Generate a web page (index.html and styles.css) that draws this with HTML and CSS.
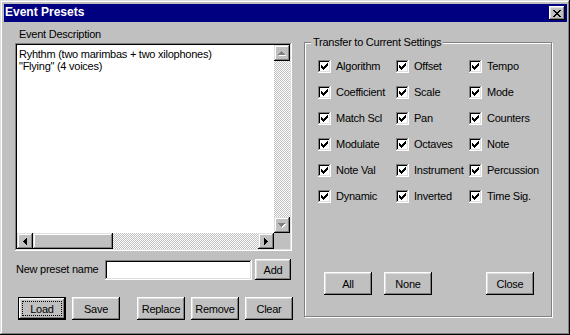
FILE: index.html
```html
<!DOCTYPE html>
<html>
<head>
  <title>Event Presets</title>
  <link rel="stylesheet" href="styles.css">
</head>
<body>
  <div class="window">
    <div class="titlebar">
      <span class="title">Event Presets</span>
      <button class="close-btn">
        <svg width="8" height="7" viewBox="0 0 8 7" shape-rendering="crispEdges"><path fill="#000" d="M0 0h2v1h-2z M6 0h2v1h-2z M1 1h2v1h-2z M5 1h2v1h-2z M2 2h4v1h-4z M3 3h2v1h-2z M2 4h4v1h-4z M1 5h2v1h-2z M5 5h2v1h-2z M0 6h2v1h-2z M6 6h2v1h-2z"/></svg>
      </button>
    </div>

    <div class="content">
      <!-- preset list side -->
      <div class="left">
        <div class="caption">Event Description</div>
        <div class="listbox">
          <div class="items">
            <div>Ryhthm (two marimbas + two xilophones)</div>
            <div>"Flying" (4 voices)</div>
          </div>
          <div class="vscroll">
            <div class="sbtn">
              <svg width="8" height="5" viewBox="0 0 8 5" shape-rendering="crispEdges"><path fill="#fff" d="M4 1h1v1h-1z M3 2h3v1h-3z M2 3h5v1h-5z M1 4h7v1h-7z"/><path fill="#808080" d="M3 0h1v1h-1z M2 1h3v1h-3z M1 2h5v1h-5z M0 3h7v1h-7z"/></svg>
            </div>
            <div class="track"></div>
            <div class="sbtn">
              <svg width="8" height="5" viewBox="0 0 8 5" shape-rendering="crispEdges"><path fill="#fff" d="M1 1h7v1h-7z M2 2h5v1h-5z M3 3h3v1h-3z M4 4h1v1h-1z"/><path fill="#808080" d="M0 0h7v1h-7z M1 1h5v1h-5z M2 2h3v1h-3z M3 3h1v1h-1z"/></svg>
            </div>
          </div>
          <div class="hscroll">
            <div class="sbtn">
              <svg width="4" height="7" viewBox="0 0 4 7" shape-rendering="crispEdges"><path fill="#000" d="M3 0h1v7h-1z M2 1h1v5h-1z M1 2h1v3h-1z M0 3h1v1h-1z"/></svg>
            </div>
            <div class="thumb"></div>
            <div class="track"></div>
            <div class="sbtn">
              <svg width="4" height="7" viewBox="0 0 4 7" shape-rendering="crispEdges"><path fill="#000" d="M0 0h1v7h-1z M1 1h1v5h-1z M2 2h1v3h-1z M3 3h1v1h-1z"/></svg>
            </div>
          </div>
          <div class="corner"></div>
        </div>

        <div class="name-row">
          <label class="name-label">New preset name</label>
          <input class="field" type="text">
          <button class="btn add">Add</button>
        </div>

        <div class="actions">
          <button class="btn default">Load</button>
          <button class="btn">Save</button>
          <button class="btn sep">Replace</button>
          <button class="btn">Remove</button>
          <button class="btn">Clear</button>
        </div>
      </div>

      <!-- transfer options -->
      <div class="group">
        <div class="legend">Transfer to Current Settings</div>
        <div class="checks" id="checks"></div>
        <div class="group-actions">
          <button class="btn">All</button>
          <button class="btn none">None</button>
          <button class="btn close">Close</button>
        </div>
      </div>
    </div>
  </div>

  <script>
    const options = [
      'Algorithm', 'Offset', 'Tempo',
      'Coefficient', 'Scale', 'Mode',
      'Match Scl', 'Pan', 'Counters',
      'Modulate', 'Octaves', 'Note',
      'Note Val', 'Instrument', 'Percussion',
      'Dynamic', 'Inverted', 'Time Sig.'
    ];
    const tick = '<svg width="7" height="7" viewBox="0 0 7 7" shape-rendering="crispEdges"><path fill="#000" d="M6 0h1v1h-1z M5 1h2v1h-2z M0 2h1v1h-1z M4 2h3v1h-3z M0 3h2v1h-2z M3 3h3v1h-3z M0 4h5v1h-5z M1 5h3v1h-3z M2 6h1v1h-1z"/></svg>';
    const checks = document.getElementById('checks');
    options.forEach(name => {
      const row = document.createElement('div');
      row.className = 'check';
      row.innerHTML = '<span class="box">' + tick + '</span><span>' + name + '</span>';
      checks.appendChild(row);
    });
  </script>
</body>
</html>
```

FILE: styles.css
```css
* {
  box-sizing: border-box;
}
body {
  margin: 0;
  background: #c0c0c0;
  font-family: "Liberation Sans", Arial, sans-serif;
  font-size: 11px;
  letter-spacing: -0.25px;
  color: #000;
}
.window {
  width: 570px;
  height: 335px;
  padding: 4px 3px 3px 4px;
  background: #c0c0c0;
  box-shadow: inset -1px -1px #000, inset 1px 1px #dfdfdf, inset -2px -2px #808080, inset 2px 2px #fff;
}
.titlebar {
  height: 18px;
  background: #000080;
  color: #fff;
  display: flex;
  justify-content: space-between;
  align-items: flex-start;
  padding: 0 2px 0 1px;
}
.title {
  font-weight: bold;
  font-size: 12px;
  line-height: 16px;
  letter-spacing: 0;
}
.close-btn {
  width: 16px;
  height: 14px;
  margin-top: 2px;
  padding: 0;
  border: 0;
  background: #c0c0c0;
  display: flex;
  align-items: center;
  justify-content: center;
  box-shadow: inset -1px -1px #000, inset 1px 1px #fff, inset -2px -2px #808080, inset 2px 2px #dfdfdf;
}

.content {
  display: flex;
  align-items: flex-start;
  gap: 11px;
  padding-left: 11px;
}
.left {
  width: 278px;
}
.caption {
  margin-top: 6px;
  margin-bottom: 2px;
  padding-left: 4px;
  line-height: 13px;
  height: 13px;
}

.listbox {
  width: 277px;
  height: 208px;
  padding: 2px;
  background: #fff;
  box-shadow: inset -1px -1px #fff, inset 1px 1px #808080, inset -2px -2px #dfdfdf, inset 2px 2px #000;
  display: grid;
  grid-template-columns: 1fr 16px;
  grid-template-rows: 1fr 16px;
}
.items {
  padding: 3px 0 0 2px;
  line-height: 12px;
  white-space: nowrap;
  overflow: hidden;
}
.vscroll {
  display: flex;
  flex-direction: column;
}
.hscroll {
  display: flex;
}
.track {
  flex: 1;
  background: repeating-conic-gradient(#c0c0c0 0% 25%, #fff 0% 50%) 0 0 / 2px 2px;
}
.sbtn, .thumb {
  width: 16px;
  height: 16px;
  background: #c0c0c0;
  display: flex;
  align-items: center;
  justify-content: center;
  box-shadow: inset -1px -1px #000, inset 1px 1px #dfdfdf, inset -2px -2px #808080, inset 2px 2px #fff;
}
.thumb {
  width: 80px;
}
.corner {
  background: #c0c0c0;
}

.name-row {
  display: flex;
  align-items: center;
  margin-top: 8px;
  height: 21px;
  padding-left: 1px;
}
.name-label {
  width: 89px;
  line-height: 13px;
}
.field {
  width: 147px;
  height: 20px;
  border: 0;
  padding: 0 3px;
  font: inherit;
  background: #fff;
  box-shadow: inset -1px -1px #fff, inset 1px 1px #808080, inset -2px -2px #dfdfdf, inset 2px 2px #000;
}

.btn {
  position: relative;
  width: 48px;
  height: 23px;
  padding: 0;
  border: 0;
  font: inherit;
  letter-spacing: inherit;
  color: #000;
  background: #c0c0c0;
  box-shadow: inset -1px -1px #000, inset 1px 1px #fff, inset -2px -2px #808080, inset 2px 2px #dfdfdf;
}
.btn.add {
  width: 36px;
  height: 21px;
  margin-left: 3px;
}
.btn.default {
  box-shadow: inset 0 0 0 1px #000, inset -2px -2px #000, inset 2px 2px #fff, inset -3px -3px #808080, inset 3px 3px #dfdfdf;
}
.btn.default::after {
  content: "";
  position: absolute;
  top: 4px;
  left: 4px;
  right: 4px;
  bottom: 4px;
  border: 1px dotted #000;
}

.actions {
  display: flex;
  gap: 6px;
  margin-top: 17px;
  padding-left: 3px;
}
.btn.sep {
  margin-left: 11px;
}

.group {
  position: relative;
  width: 248px;
  height: 275px;
  margin-top: 20px;
  padding: 17px 0 0 13px;
  border: 1px solid #808080;
  box-shadow: 1px 1px 0 #fff, inset 1px 1px 0 #fff;
}
.legend {
  position: absolute;
  top: -7px;
  left: 6px;
  padding: 0 2px;
  line-height: 13px;
  background: #c0c0c0;
}
.checks {
  display: grid;
  grid-template-columns: 78px 73px auto;
  row-gap: 13px;
}
.check {
  display: flex;
  align-items: center;
  gap: 5px;
  height: 13px;
  white-space: nowrap;
  line-height: 13px;
}
.box {
  width: 13px;
  height: 13px;
  flex: none;
  display: flex;
  align-items: center;
  justify-content: center;
  background: #fff;
  box-shadow: inset -1px -1px #fff, inset 1px 1px #808080, inset -2px -2px #dfdfdf, inset 2px 2px #000;
}
.group-actions {
  display: flex;
  margin-top: 69px;
  padding-left: 6px;
}
.btn.none {
  margin-left: 12px;
}
.btn.close {
  margin-left: 54px;
}
```
